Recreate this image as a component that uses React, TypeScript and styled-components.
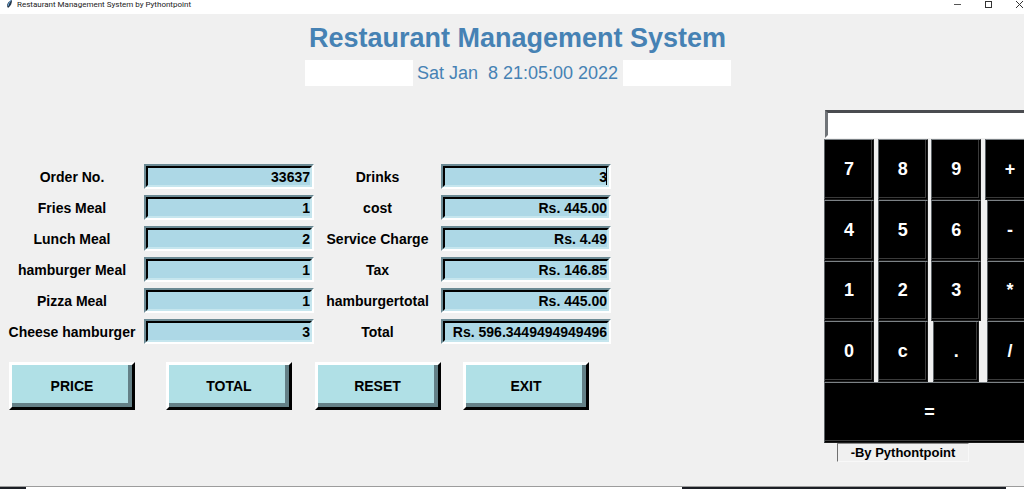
import React from "react";
import styled, { createGlobalStyle } from "styled-components";

const Global = createGlobalStyle`
  * { box-sizing: border-box; }
  body { margin: 0; background: #ffffff; }
  body, button, input { font-family: "Liberation Sans", Arial, sans-serif; }
`;

const Screen = styled.div`
  min-height: 100vh;
  display: flex;
  flex-direction: column;
  overflow: hidden;
`;

const TitleBar = styled.header`
  height: 14px;
  display: flex;
  align-items: flex-start;
  background: #ffffff;
  padding-left: 5px;
`;

const WindowTitle = styled.span`
  flex: 1;
  padding-left: 3px;
  font: 8px/9px Roboto, sans-serif;
  color: #222222;
`;

const WindowButtons = styled.div`
  display: flex;
  gap: 14px;
  margin-right: -4px;
`;

const WindowButton = styled.button`
  width: 17px;
  height: 10px;
  padding: 0;
  border: 0;
  background: none;
  display: flex;
  justify-content: center;
`;

const Body = styled.main`
  flex: 1;
  width: calc(100% + 11px);
  display: flex;
  flex-direction: column;
  background: #f0f0f0;
`;

const Heading = styled.div`
  display: flex;
  flex-direction: column;
  align-items: center;
  padding-top: 8px;
  color: #4682b4;
`;

const Title = styled.h1`
  margin: 0;
  font-size: 27px;
  line-height: 32px;
`;

const Clock = styled.div`
  display: grid;
  grid-template-columns: 108px 210px 108px;
  margin-top: 6px;
  height: 26px;
  font-size: 18px;
  line-height: 26px;
  text-align: center;
  white-space: pre;
`;

const Blank = styled.div`
  background: #ffffff;
`;

const Columns = styled.div`
  display: flex;
  justify-content: space-between;
  align-items: flex-start;
  padding-top: 24px;
`;

const OrderForm = styled.form`
  display: grid;
  grid-template-columns: 144px 170px 127px 170px;
  grid-auto-rows: 25px;
  row-gap: 6px;
  padding-top: 54px;
`;

const FieldLabel = styled.label`
  text-align: center;
  font-size: 14px;
  font-weight: bold;
  line-height: 27px;
  color: #000000;
  white-space: nowrap;
`;

const FieldBox = styled.div`
  display: flex;
  border: 2px solid;
  border-color: #6b8a94 #ffffff #ffffff #6b8a94;
`;

const Field = styled.input`
  flex: 1;
  min-width: 0;
  height: 21px;
  padding: 0;
  border: 2px solid;
  border-color: #000000 #c6e6ee #c6e6ee #000000;
  border-radius: 0;
  outline: none;
  background: #add8e6;
  color: #000000;
  font-size: 14px;
  font-weight: bold;
  text-align: right;
`;

const Caret = styled.span`
  width: 1px;
  height: 17px;
  position: absolute;
  right: 4px;
  top: 4px;
  background: #000000;
`;

const FieldCell = styled.div`
  position: relative;
`;

const Actions = styled.div`
  grid-column: 1 / -1;
  display: grid;
  grid-template-columns: subgrid;
  justify-items: center;
  align-self: start;
  padding-top: 12px;
`;

const ActionButton = styled.button`
  width: 126px;
  height: 48px;
  padding: 0;
  border: 3px solid;
  border-color: #ffffff #000000 #000000 #ffffff;
  background: #ffffff;
  display: flex;
`;

const ActionFace = styled.span`
  flex: 1;
  align-self: stretch;
  display: flex;
  align-items: center;
  justify-content: center;
  box-shadow: inset -4px -4px #648087;
  background: #b0e0e6;
  color: #000000;
  font-size: 14px;
  font-weight: bold;
`;

const Calculator = styled.section`
  width: 211px;
`;

const Display = styled.input`
  display: block;
  width: 100%;
  height: 28px;
  border: 3px solid;
  border-color: #4a4c50 #ffffff #ffffff #707478;
  border-radius: 0;
  outline: none;
  background: #ffffff;
  margin-bottom: 1px;
  margin-left: 1px;
`;

const Keys = styled.div`
  display: grid;
  grid-template-columns: repeat(4, 50px);
  grid-template-rows: repeat(5, 1fr);
  height: 304px;
  justify-content: space-between;
  justify-items: center;
`;

const Key = styled.button<{ $narrow?: boolean; $wide?: boolean }>`
  width: ${(p) => (p.$narrow ? "46px" : "100%")};
  grid-column: ${(p) => (p.$wide ? "1 / -1" : "auto")};
  padding: 0;
  border: 1px solid;
  border-color: #7c8286 #1a1a1a #1a1a1a #5c6266;
  background: #000000;
  box-shadow: inset -1px -1px #000000, inset -2px -2px #3a3a3a;
  color: #ffffff;
  font-size: 18px;
  font-weight: bold;
`;

const Credit = styled.div`
  width: 132px;
  height: 19px;
  margin-left: 13px;
  border: 1px solid;
  border-color: #8a8a8a #f8f8f8 #f8f8f8 #707070;
  font-size: 13px;
  font-weight: bold;
  line-height: 17px;
  text-align: center;
`;

const Footer = styled.footer`
  height: 3px;
  display: flex;
  justify-content: space-between;
  border-top: 1px solid #9c9c9c;
  padding-right: 18px;
`;

const FooterMark = styled.span<{ $width: string }>`
  width: ${(p) => p.$width};
  height: 2px;
  background: #1c1f26;
`;

const rows = [
  ["Order No.", "33637", "Drinks", "3"],
  ["Fries Meal", "1", "cost", "Rs. 445.00"],
  ["Lunch Meal", "2", "Service Charge", "Rs. 4.49"],
  ["hamburger Meal", "1", "Tax", "Rs. 146.85"],
  ["Pizza Meal", "1", "hamburgertotal", "Rs. 445.00"],
  ["Cheese hamburger", "3", "Total", "Rs. 596.3449494949496"],
];

const keys = ["7", "8", "9", "+", "4", "5", "6", "-", "1", "2", "3", "*", "0", "c", ".", "/"];
const narrowKeys = ["-", "*", ".", "/"];

function Entry({ label, value, caret }: { label: string; value: string; caret?: boolean }) {
  const id = label.replace(/\W/g, "");
  return (
    <>
      <FieldLabel htmlFor={id}>{label}</FieldLabel>
      <FieldCell>
        <FieldBox>
          <Field id={id} defaultValue={value} />
        </FieldBox>
        {caret && <Caret />}
      </FieldCell>
    </>
  );
}

export default function App() {
  return (
    <Screen>
      <Global />
      <TitleBar>
        <svg width="9" height="9" viewBox="0 0 9 9" aria-hidden="true">
          <path d="M7 0C4 1 2 3 2 6L3 8C6 6 7 3 7 0Z" fill="#26374a" />
          <path d="M6 0L4 3L3 6" stroke="#6fa8d8" fill="none" />
        </svg>
        <WindowTitle>Restaurant Management System by Pythontpoint</WindowTitle>
        <WindowButtons>
          <WindowButton aria-label="Minimize">
            <svg width="7" height="9" viewBox="0 0 7 9">
              <path d="M0 4.5H7" stroke="#555" />
            </svg>
          </WindowButton>
          <WindowButton aria-label="Maximize">
            <svg width="7" height="9" viewBox="0 0 7 9">
              <rect x="0.5" y="1.5" width="6" height="6" fill="none" stroke="#333" />
            </svg>
          </WindowButton>
          <WindowButton aria-label="Close">
            <svg width="7" height="9" viewBox="0 0 7 9">
              <path d="M0 1L7 8M7 1L0 8" stroke="#333" />
            </svg>
          </WindowButton>
        </WindowButtons>
      </TitleBar>
      <Body>
        <Heading>
          <Title>Restaurant Management System</Title>
          <Clock>
            <Blank />
            <time>{"Sat Jan  8 21:05:00 2022"}</time>
            <Blank />
          </Clock>
        </Heading>
        <Columns>
          <OrderForm>
            {rows.map(([a, av, b, bv]) => (
              <React.Fragment key={a}>
                <Entry label={a} value={av} />
                <Entry label={b} value={bv} caret={b === "Drinks"} />
              </React.Fragment>
            ))}
            <Actions>
              {["PRICE", "TOTAL", "RESET", "EXIT"].map((name) => (
                <ActionButton type="button" key={name}>
                  <ActionFace>{name}</ActionFace>
                </ActionButton>
              ))}
            </Actions>
          </OrderForm>
          <Calculator>
            <Display aria-label="Calculator display" />
            <Keys>
              {keys.map((k) => (
                <Key key={k} $narrow={narrowKeys.includes(k)}>
                  {k}
                </Key>
              ))}
              <Key $wide>=</Key>
            </Keys>
            <Credit>-By Pythontpoint</Credit>
          </Calculator>
        </Columns>
      </Body>
      <Footer>
        <FooterMark $width="26px" />
        <FooterMark $width="324px" />
      </Footer>
    </Screen>
  );
}
